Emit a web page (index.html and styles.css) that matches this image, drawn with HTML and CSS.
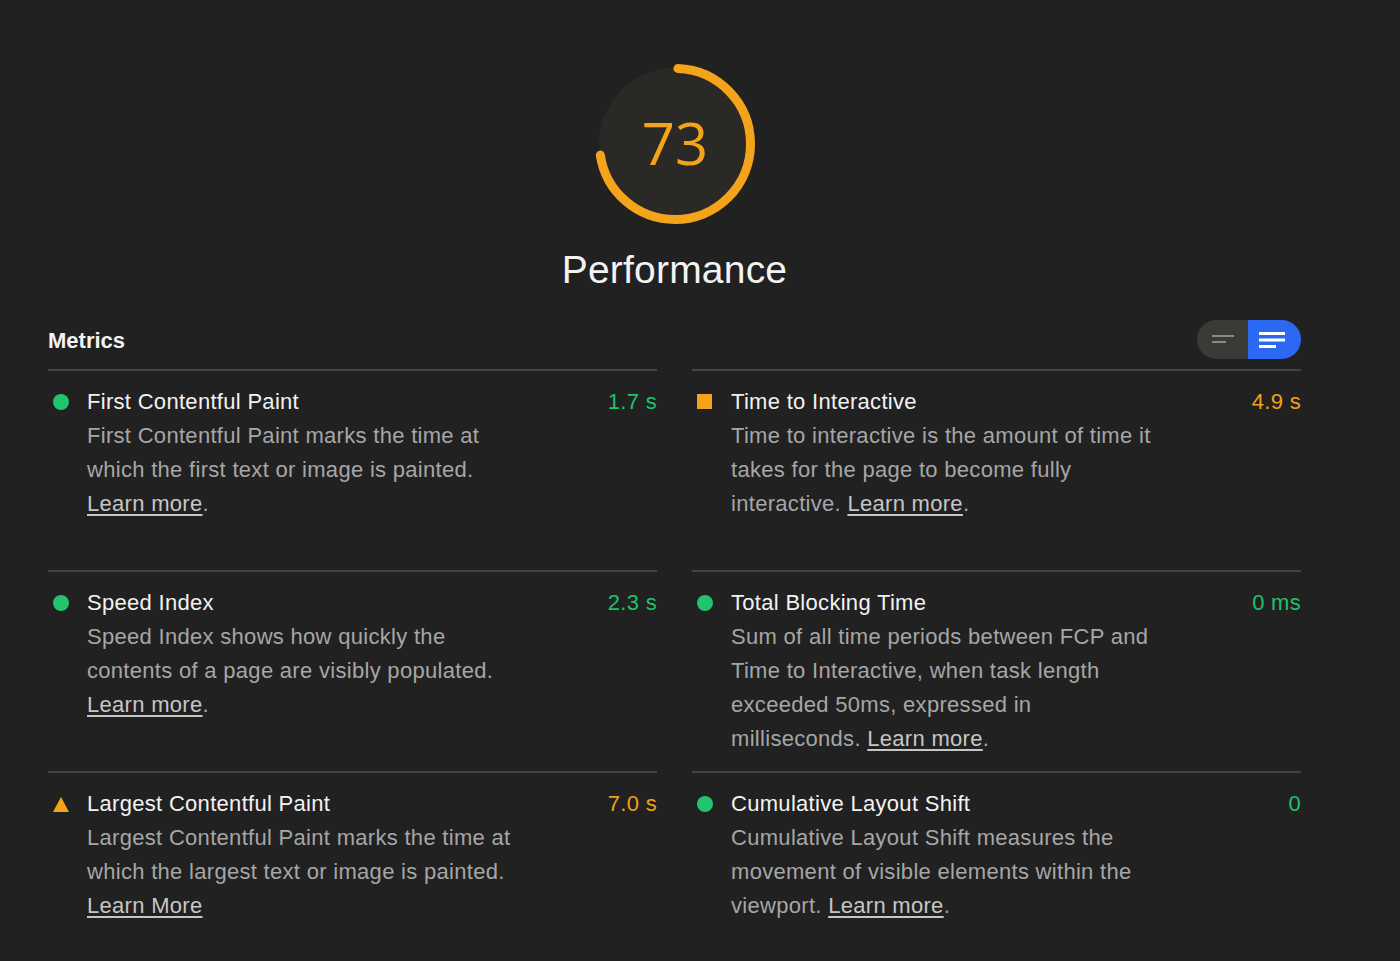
FILE: index.html
```html
<!DOCTYPE html>
<html lang="en">
<head>
<meta charset="utf-8">
<title>Performance</title>
<link rel="stylesheet" href="styles.css">
</head>
<body>
<main class="report">
  <section class="summary">
    <div class="gauge">
      <svg class="gauge-svg" width="160" height="160" viewBox="0 0 160 160">
        <circle class="gauge-base" cx="80" cy="80" r="76"></circle>
        <circle class="gauge-arc" cx="80" cy="80" r="75.5" transform="rotate(-90 80 80)"></circle>
        <text class="gauge-num" x="80" y="101" text-anchor="middle">73</text>
      </svg>
    </div>
    <h1 class="summary-title">Performance</h1>
  </section>

  <section class="metrics">
    <header class="metrics-head">
      <h2 class="metrics-title">Metrics</h2>
      <div class="toggle">
        <span class="toggle-opt toggle-opt--off">
          <svg width="24" height="12" viewBox="0 0 24 12"><rect x="0" y="1" width="22" height="2" fill="#8c8a87"/><rect x="0" y="7" width="14" height="2" fill="#8c8a87"/></svg>
        </span>
        <span class="toggle-opt toggle-opt--on">
          <svg width="28" height="18" viewBox="0 0 28 18"><rect x="0" y="1" width="26" height="3" fill="#fff"/><rect x="0" y="7.5" width="26" height="3" fill="#fff"/><rect x="0" y="14" width="17" height="3" fill="#fff"/></svg>
        </span>
      </div>
    </header>

    <div class="metric-grid">
      <div class="metric">
        <span class="icon icon--pass"></span>
        <div class="metric-body">
          <div class="metric-line"><span class="metric-name">First Contentful Paint</span><span class="metric-value pass">1.7 s</span></div>
          <p class="metric-desc">First Contentful Paint marks the time at which the first text or image is painted. <a href="#">Learn more</a>.</p>
        </div>
      </div>
      <div class="metric">
        <span class="icon icon--average-sq"></span>
        <div class="metric-body">
          <div class="metric-line"><span class="metric-name">Time to Interactive</span><span class="metric-value average">4.9 s</span></div>
          <p class="metric-desc">Time to interactive is the amount of time it takes for the page to become fully interactive. <a href="#">Learn more</a>.</p>
        </div>
      </div>
      <div class="metric">
        <span class="icon icon--pass"></span>
        <div class="metric-body">
          <div class="metric-line"><span class="metric-name">Speed Index</span><span class="metric-value pass">2.3 s</span></div>
          <p class="metric-desc">Speed Index shows how quickly the contents of a page are visibly populated. <a href="#">Learn more</a>.</p>
        </div>
      </div>
      <div class="metric">
        <span class="icon icon--pass"></span>
        <div class="metric-body">
          <div class="metric-line"><span class="metric-name">Total Blocking Time</span><span class="metric-value pass">0 ms</span></div>
          <p class="metric-desc">Sum of all time periods between FCP and Time to Interactive, when task length exceeded 50ms, expressed in milliseconds. <a href="#">Learn more</a>.</p>
        </div>
      </div>
      <div class="metric">
        <span class="icon icon--average-tri"></span>
        <div class="metric-body">
          <div class="metric-line"><span class="metric-name">Largest Contentful Paint</span><span class="metric-value average">7.0 s</span></div>
          <p class="metric-desc">Largest Contentful Paint marks the time at which the largest text or image is painted. <a href="#">Learn More</a></p>
        </div>
      </div>
      <div class="metric">
        <span class="icon icon--pass"></span>
        <div class="metric-body">
          <div class="metric-line"><span class="metric-name">Cumulative Layout Shift</span><span class="metric-value pass">0</span></div>
          <p class="metric-desc">Cumulative Layout Shift measures the movement of visible elements within the viewport. <a href="#">Learn more</a>.</p>
        </div>
      </div>
    </div>
  </section>
</main>
</body>
</html>
```

FILE: styles.css
```css
* { box-sizing: border-box; }

html, body {
  margin: 0;
  padding: 0;
  background: #212121;
}

body {
  font-family: "Liberation Sans", Arial, Helvetica, sans-serif;
  color: #f1f1f1;
}

.report {
  width: 1253px;
  margin-left: 48px;
  padding-top: 64px;
}

.summary {
  display: flex;
  flex-direction: column;
  align-items: center;
}

.gauge {
  width: 160px;
  height: 160px;
}

.gauge-svg { display: block; }

.gauge-base {
  fill: #2b2926;
}

.gauge-arc {
  fill: none;
  stroke: #f4a41b;
  stroke-width: 9;
  stroke-linecap: round;
  stroke-dasharray: 341 1000;
  stroke-dashoffset: -3;
}

.gauge-num {
  font-family: "Open Sans", "Liberation Sans", sans-serif;
  font-size: 58px;
  fill: #f4a41b;
}

.summary-title {
  margin: 23px 0 0;
  font-size: 39px;
  line-height: 46px;
  font-weight: 400;
  letter-spacing: 0.2px;
  color: #f3f3f3;
}

.metrics {
  margin-top: 27px;
}

.metrics-head {
  display: flex;
  align-items: center;
  justify-content: space-between;
  height: 39px;
  margin-bottom: 10px;
}

.metrics-title {
  margin: 0;
  padding-top: 2px;
  font-size: 22px;
  font-weight: 700;
  color: #f4f4f4;
}

.toggle {
  display: flex;
  width: 104px;
  height: 39px;
  border-radius: 20px;
  overflow: hidden;
}

.toggle-opt {
  flex: 1;
  display: flex;
  align-items: center;
  justify-content: center;
}

.toggle-opt--off {
  background: #3c3a37;
  padding-left: 2px;
}

.toggle-opt--on {
  background: #2c69f3;
  padding-right: 4px;
}

.toggle-opt svg { display: block; }

.metric-grid {
  display: grid;
  grid-template-columns: 609px 609px;
  column-gap: 35px;
}

.metric {
  display: flex;
  align-items: flex-start;
  min-height: 201px;
  border-top: 2px solid #46433f;
  padding-top: 13px;
}

.icon {
  flex: none;
  width: 16px;
  height: 16px;
  margin: 10px 18px 0 5px;
}

.icon--pass {
  border-radius: 50%;
  background: #22c46d;
}

.icon--average-sq {
  width: 15px;
  height: 15px;
  margin-top: 10px;
  margin-left: 5px;
  margin-right: 19px;
  background: #f4a41b;
}

.icon--average-tri {
  width: 0;
  height: 0;
  margin-top: 11px;
  margin-right: 18px;
  border-left: 8px solid transparent;
  border-right: 8px solid transparent;
  border-bottom: 15px solid #f4a41b;
}

.metric-body {
  flex: 1;
  min-width: 0;
}

.metric-line {
  display: flex;
  justify-content: space-between;
  font-size: 22px;
  line-height: 35px;
  letter-spacing: 0.3px;
}

.metric-name { color: #f2f2f2; }

.metric-value.pass { color: #1ec26b; }
.metric-value.average { color: #f0a01c; }

.metric-desc {
  margin: 0;
  max-width: 436px;
  font-size: 22px;
  line-height: 34px;
  letter-spacing: 0.3px;
  color: #a6a6a6;
}

.metric-desc a {
  color: #c6c6c6;
  text-decoration: underline;
  text-decoration-thickness: 2px;
  text-underline-offset: 3px;
}
```
